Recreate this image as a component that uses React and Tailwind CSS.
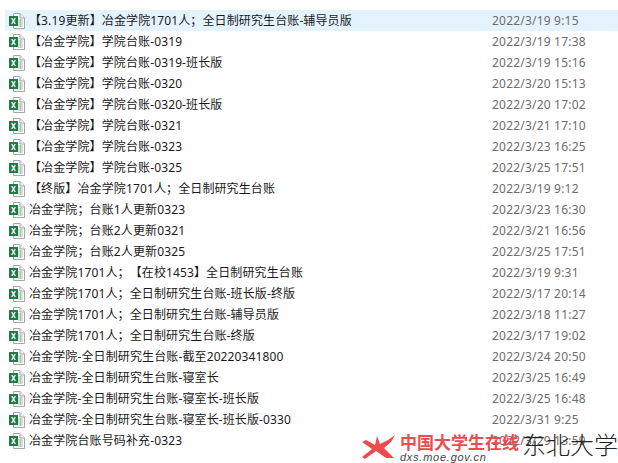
const ROWS = [
  ['【3.19更新】冶金学院1701人；全日制研究生台账-辅导员版', '2022/3/19 9:15'],
  ['【冶金学院】学院台账-0319', '2022/3/19 17:38'],
  ['【冶金学院】学院台账-0319-班长版', '2022/3/19 15:16'],
  ['【冶金学院】学院台账-0320', '2022/3/20 15:13'],
  ['【冶金学院】学院台账-0320-班长版', '2022/3/20 17:02'],
  ['【冶金学院】学院台账-0321', '2022/3/21 17:10'],
  ['【冶金学院】学院台账-0323', '2022/3/23 16:25'],
  ['【冶金学院】学院台账-0325', '2022/3/25 17:51'],
  ['【终版】冶金学院1701人；全日制研究生台账', '2022/3/19 9:12'],
  ['冶金学院；台账1人更新0323', '2022/3/23 16:30'],
  ['冶金学院；台账2人更新0321', '2022/3/21 16:56'],
  ['冶金学院；台账2人更新0325', '2022/3/25 17:51'],
  ['冶金学院1701人；【在校1453】全日制研究生台账', '2022/3/19 9:31'],
  ['冶金学院1701人；全日制研究生台账-班长版-终版', '2022/3/17 20:14'],
  ['冶金学院1701人；全日制研究生台账-辅导员版', '2022/3/18 11:27'],
  ['冶金学院1701人；全日制研究生台账-终版', '2022/3/17 19:02'],
  ['冶金学院-全日制研究生台账-截至20220341800', '2022/3/24 20:50'],
  ['冶金学院-全日制研究生台账-寝室长', '2022/3/25 16:49'],
  ['冶金学院-全日制研究生台账-寝室长-班长版', '2022/3/25 16:48'],
  ['冶金学院-全日制研究生台账-寝室长-班长版-0330', '2022/3/31 9:25'],
  ['冶金学院台账号码补充-0323', '2022/3/29 13:59'],
];

function ExcelIcon() {
  return (
    <svg width="16" height="16" viewBox="0 0 16 16" className="shrink-0">
      <path d="M4.5 0.5H11L15.5 5V15.5H4.5Z" fill="#fff" stroke="#a6a6a6" />
      <path d="M11 0.5V5H15.5" fill="#eee" stroke="#a6a6a6" />
      <path d="M9 7H14M9 9H14M9 11H14M9 13H14M11.5 6V14" stroke="#a9bfae" strokeWidth="1" />
      <rect x="0" y="3" width="9" height="10" fill="#1f7a45" />
      <path d="M2.7 5.2L6.3 10.8M6.3 5.2L2.7 10.8" stroke="#fff" strokeWidth="1.3" />
    </svg>
  );
}

function Row({ name, date, selected }) {
  return (
    <div className={`flex items-center h-[21px] ${selected ? 'bg-[#e5f3ff]' : ''}`}>
      <div className="w-[4px] shrink-0" />
      <ExcelIcon />
      <div className="w-[467px] pl-[4px] shrink-0 text-[12px] text-[#1a1a1a] whitespace-nowrap [text-spacing-trim:space-all] tracking-[0.12px]">{name}</div>
      <div className="text-[12px] text-[#6d6d6d] whitespace-nowrap tracking-[0.2px]">{date}</div>
    </div>
  );
}

function Watermark() {
  return (
    <div className="absolute left-[362px] top-[432px] flex items-start">
      <svg width="33" height="24" viewBox="0 0 33 24" className="shrink-0 mt-[3px]">
        <path d="M0 7L4 5L13 10L15 1L18 9L26 5L33 0L29 7L22 13L32 23L24 23L14 16L3 24L0 22L10 14Z" fill="#ee4b4f" />
      </svg>
      <div className="ml-[5px] w-[122px] shrink-0 pt-[2px]">
        <div className="text-[17px] leading-[18px] font-bold text-[#ee4b4f] whitespace-nowrap">中国大学生在线</div>
        <div className="text-[11px] leading-[12px] italic text-[#444] tracking-[0.75px] -mt-[1px] font-['Liberation_Sans',sans-serif] whitespace-nowrap">dxs.moe.gov.cn</div>
      </div>
      <div className="text-[24px] leading-[26px] font-light text-[#222] whitespace-nowrap">东北大学</div>
    </div>
  );
}

export default function App() {
  return (
    <div className="relative w-[618px] h-[463px] overflow-hidden bg-white pt-[10px] pl-[5px] font-['Noto_Sans','Noto_Sans_CJK_SC',sans-serif]">
      {ROWS.map((r, i) => (
        <Row key={i} name={r[0]} date={r[1]} selected={i === 0} />
      ))}
      <Watermark />
    </div>
  );
}
